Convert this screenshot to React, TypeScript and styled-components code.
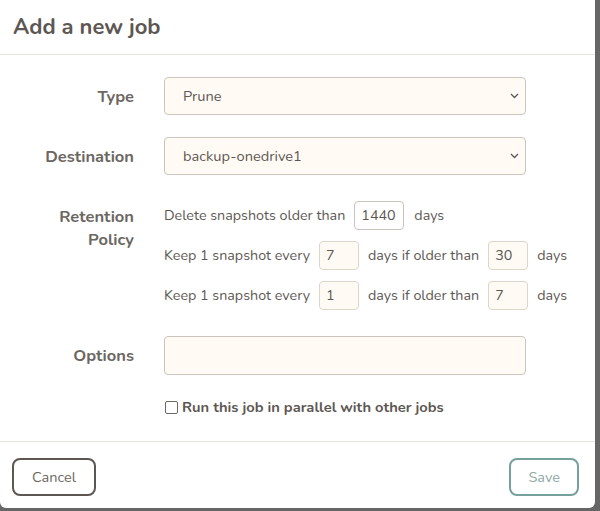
import React from 'react'
import styled, { createGlobalStyle } from 'styled-components'

const GlobalStyle = createGlobalStyle`
  html, body {
    margin: 0;
    padding: 0;
    background: #666666;
  }
  body {
    font-family: 'Nunito', Lato, 'Noto Sans', sans-serif;
    color: #5d5753;
  }
  * { box-sizing: border-box; }
`

const Backdrop = styled.div`
  width: 600px;
  height: 511px;
  overflow: hidden;
  background: #666666;
`

const Modal = styled.div`
  width: 595px;
  height: 508px;
  background: #ffffff;
  border-radius: 0 0 6px 6px;
  display: flex;
  flex-direction: column;
`

const Header = styled.div`
  height: 55px;
  padding: 12px 13px 0;
  border-bottom: 1px solid #e6e3e0;
`

const Title = styled.h2`
  margin: 0;
  font-size: 22px;
  font-weight: 700;
  color: #5d5753;
`

const Body = styled.div`
  flex: 1;
  padding: 22px 0 0;
  display: grid;
  grid-template-columns: 134px 1fr;
  column-gap: 30px;
  row-gap: 22px;
  align-content: start;
  border-bottom: 1px solid #e6e3e0;
`

const Label = styled.div<{ $top?: number }>`
  text-align: right;
  font-size: 16.5px;
  font-weight: 700;
  color: #6b6661;
  line-height: 23px;
  padding-top: ${(p) => p.$top ?? 0}px;
  align-self: ${(p) => (p.$top === undefined ? 'center' : 'start')};
`

const SelectWrap = styled.div`
  position: relative;
  width: 362px;
`

const Select = styled.select`
  appearance: none;
  width: 100%;
  height: 38px;
  padding: 0 30px 0 18px;
  background: #fffbf4;
  border: 1px solid #cdc5bd;
  border-radius: 4px;
  font-family: inherit;
  font-size: 14.6px;
  color: #5d5753;
  outline: none;
`

const Chevron = styled.svg`
  position: absolute;
  right: 7px;
  top: 16px;
  pointer-events: none;
`

const TextInput = styled.input`
  width: 362px;
  height: 39px;
  background: #fffbf4;
  border: 1px solid #cdc5bd;
  border-radius: 4px;
  outline: none;
`

const Retention = styled.div`
  display: flex;
  flex-direction: column;
  gap: 11px;
  padding: 4px 0;
`

const PolicyRow = styled.div`
  display: flex;
  align-items: center;
  height: 29px;
  font-size: 14.3px;
  color: #5d5753;
  white-space: nowrap;
`

const Gap = styled.span<{ $w: number }>`
  display: inline-block;
  flex-shrink: 0;
  width: ${(p) => p.$w}px;
`

const NumInput = styled.input<{ $w: number; $focus?: boolean }>`
  width: ${(p) => p.$w}px;
  height: 29px;
  padding: 0 6px;
  background: ${(p) => (p.$focus ? '#ffffff' : '#fffbf4')};
  border: 1px solid ${(p) => (p.$focus ? '#c9c3be' : '#ddd5cc')};
  border-radius: 4px;
  font-family: inherit;
  font-size: 14.3px;
  color: #5d5753;
  outline: none;
  caret-color: #333;
`

const CheckRow = styled.label`
  grid-column: 2;
  display: flex;
  align-items: center;
  gap: 4px;
  height: 20px;
  font-size: 14.7px;
  font-weight: 700;
  color: #5d5753;
`

const Box = styled.span`
  width: 13px;
  height: 13px;
  margin-left: 1px;
  border: 1.5px solid #6e6863;
  border-radius: 2px;
  background: #fff;
`

const Footer = styled.div`
  height: 66px;
  padding: 16px 16px 0 12px;
  display: flex;
  justify-content: space-between;
  align-items: flex-start;
`

const Button = styled.button<{ $tone: 'dark' | 'teal' }>`
  height: 38px;
  padding: 0 ${(p) => (p.$tone === 'dark' ? 18 : 17)}px;
  background: #ffffff;
  border: 2px solid ${(p) => (p.$tone === 'dark' ? '#5d5753' : '#76a09b')};
  border-radius: 8px;
  font-family: inherit;
  font-size: 14.5px;
  color: ${(p) => (p.$tone === 'dark' ? '#6b6661' : '#8fa9a6')};
`

const Down = () => (
  <Chevron width="9" height="6" viewBox="0 0 9 6">
    <path d="M1 1l3.5 3.5L8 1" fill="none" stroke="#5d5753" strokeWidth="1.3" />
  </Chevron>
)

export default function App() {
  return (
    <>
      <GlobalStyle />
      <Backdrop>
        <Modal>
          <Header>
            <Title>Add a new job</Title>
          </Header>
          <Body>
            <Label>Type</Label>
            <SelectWrap>
              <Select defaultValue="prune">
                <option value="prune">Prune</option>
              </Select>
              <Down />
            </SelectWrap>

            <Label>Destination</Label>
            <SelectWrap>
              <Select defaultValue="od1">
                <option value="od1">backup-onedrive1</option>
              </Select>
              <Down />
            </SelectWrap>

            <Label $top={8}>
              Retention
              <br />
              Policy
            </Label>
            <Retention>
              <PolicyRow>
                Delete snapshots older than
                <Gap $w={9} />
                <NumInput $w={50} $focus defaultValue="1440" />
                <Gap $w={10} />
                days
              </PolicyRow>
              <PolicyRow>
                Keep 1 snapshot every
                <Gap $w={9} />
                <NumInput $w={40} defaultValue="7" />
                <Gap $w={9} />
                days if older than
                <Gap $w={9} />
                <NumInput $w={40} defaultValue="30" />
                <Gap $w={9} />
                days
              </PolicyRow>
              <PolicyRow>
                Keep 1 snapshot every
                <Gap $w={9} />
                <NumInput $w={40} defaultValue="1" />
                <Gap $w={9} />
                days if older than
                <Gap $w={9} />
                <NumInput $w={40} defaultValue="7" />
                <Gap $w={9} />
                days
              </PolicyRow>
            </Retention>

            <Label>Options</Label>
            <TextInput />

            <CheckRow>
              <Box />
              Run this job in parallel with other jobs
            </CheckRow>
          </Body>
          <Footer>
            <Button $tone="dark">Cancel</Button>
            <Button $tone="teal">Save</Button>
          </Footer>
        </Modal>
      </Backdrop>
    </>
  )
}
